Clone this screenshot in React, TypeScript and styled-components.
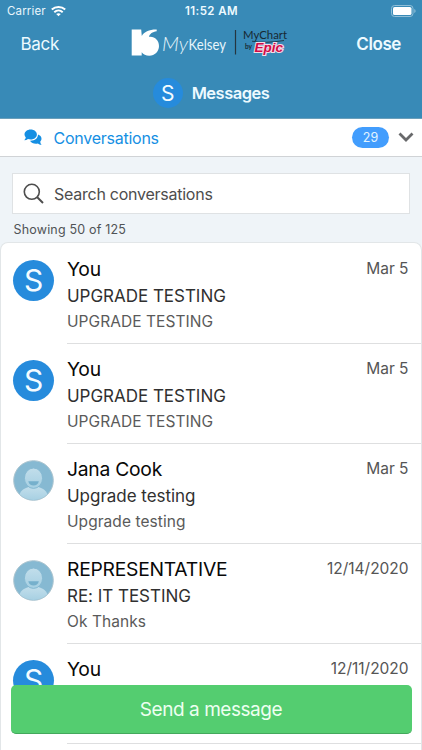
import React from "react";
import styled, { createGlobalStyle } from "styled-components";

const Global = createGlobalStyle`
  * { box-sizing: border-box; }
  html, body { margin: 0; height: 750px; overflow: hidden; }
  body { font-family: Inter, "Liberation Sans", sans-serif; background: #eff4f8; }
`;

const Screen = styled.div`
  position: relative;
  width: 422px;
  height: 750px;
  overflow: hidden;
  display: flex;
  flex-direction: column;
  background: #eff4f8;
`;

const Header = styled.header`
  flex: none;
  height: 119px;
  background: #388ab7;
  border-bottom: 1px solid #6b9fba;
  color: #fff;
  display: flex;
  flex-direction: column;
`;

const StatusBar = styled.div`
  height: 22px;
  padding: 0 6px 0 7px;
  display: grid;
  grid-template-columns: 1fr auto 1fr;
  align-items: center;
  font-size: 11.5px;
`;

const Carrier = styled.div`
  display: flex;
  align-items: center;
  gap: 5px;
  letter-spacing: 0.15px;
  color: #e9f6fc;
  svg { display: block; margin-top: -1px; }
`;

const Clock = styled.div`
  font-weight: 600;
  letter-spacing: 0.4px;
  color: #edfaff;
`;

const Battery = styled.svg`
  display: block;
  justify-self: end;
  margin-top: -1px;
`;

const NavBar = styled.nav`
  height: 42px;
  padding: 0 21px 0 20.5px;
  display: grid;
  grid-template-columns: 1fr auto 1fr;
  align-items: center;
`;

const NavLink = styled.span<{ $strong?: boolean }>`
  font-size: 17px;
  line-height: 22px;
  margin-top: 1px;
  font-weight: ${(p) => (p.$strong ? 600 : 400)};
  letter-spacing: ${(p) => (p.$strong ? "-0.4px" : "-0.3px")};
  justify-self: ${(p) => (p.$strong ? "end" : "start")};
  color: #edfaff;
`;

const Logo = styled.svg`
  display: block;
  margin-right: 1px;
`;

const TitleBar = styled.div`
  height: 54px;
  padding-top: 4px;
  display: flex;
  align-items: center;
  justify-content: center;
  gap: 9px;
  font-size: 16.5px;
  font-weight: 600;
  letter-spacing: -0.5px;
  color: #edfaff;
`;

const TitleText = styled.span`
  padding-bottom: 1px;
`;

const Initial = styled.span<{ $size: number; $font: number }>`
  flex: none;
  width: ${(p) => p.$size}px;
  height: ${(p) => p.$size}px;
  padding-bottom: ${(p) => (p.$size > 35 ? 2 : 0)}px;
  border-radius: 50%;
  background: #268bdc;
  color: #f4fbff;
  display: flex;
  align-items: center;
  justify-content: center;
  font-size: ${(p) => p.$font}px;
  font-weight: 400;
  letter-spacing: 0;
`;

const FolderBar = styled.div`
  flex: none;
  height: 38px;
  padding: 0 8.5px 0 24px;
  background: #fff;
  border-bottom: 1px solid #d0d3d6;
  display: flex;
  align-items: center;
  svg { display: block; flex: none; }
`;

const FolderName = styled.span`
  flex: 1;
  margin-left: 11.5px;
  font-size: 16px;
  letter-spacing: -0.25px;
  color: #158fe3;
`;

const Count = styled.span`
  width: 37px;
  height: 21px;
  margin-right: 8.5px;
  border-radius: 11px;
  background: #429dfd;
  color: #e2f4ff;
  font-size: 12.5px;
  display: flex;
  align-items: center;
  justify-content: center;
`;

const SearchBox = styled.div`
  flex: none;
  height: 41px;
  margin: 16px 12px 0;
  padding-left: 10px;
  background: #fff;
  border: 1px solid #dfe2e4;
  display: flex;
  align-items: center;
  gap: 10px;
  font-size: 16px;
  letter-spacing: -0.25px;
  color: #4d4d4d;
`;

const Showing = styled.div`
  flex: none;
  height: 29px;
  padding: 7px 13.5px 0;
  font-size: 12.5px;
  line-height: 18px;
  letter-spacing: 0.18px;
  color: #505356;
`;

const List = styled.ul`
  flex: none;
  margin: 0 1px;
  padding: 1px 0 0 12px;
  list-style: none;
  background: #fff;
  border-radius: 7px 7px 0 0;
  box-shadow: 0 0 0 1px #e2e6e8;
`;

const Item = styled.li`
  height: 100px;
  display: flex;
  gap: 13px;
  & > :first-child { margin-top: 16px; }
`;

const Body = styled.div`
  flex: 1;
  height: 100px;
  padding: 11px 12.5px 0 0;
  border-bottom: 1.5px solid #dedfe0;
`;

const TopLine = styled.div`
  display: flex;
  justify-content: space-between;
  align-items: center;
  height: 28px;
`;

const Sender = styled.span`
  font-size: 19.3px;
  line-height: 24px;
  padding-bottom: 1px;
  letter-spacing: -0.25px;
  color: #080808;
`;

const DateText = styled.span`
  font-size: 15.5px;
  letter-spacing: -0.03px;
  padding-bottom: 1px;
  color: #555;
`;

const Subject = styled.div`
  font-size: 17px;
  line-height: 26px;
  letter-spacing: -0.03px;
  color: #303030;
`;

const Preview = styled.div`
  font-size: 15.5px;
  line-height: 25px;
  letter-spacing: 0.06px;
  color: #5a5a5a;
`;

const SendButton = styled.button`
  position: absolute;
  left: 10.5px;
  right: 10.5px;
  bottom: 16.5px;
  height: 49px;
  padding: 2px 0 0;
  border: 0;
  border-bottom: 1.5px solid #43a85c;
  border-radius: 5px;
  background: #54cd70;
  color: #edfff0;
  font-family: inherit;
  font-size: 19px;
  letter-spacing: -0.45px;
`;

const Person = () => (
  <svg width="41" height="41" viewBox="0 0 41 41">
    <defs>
      <linearGradient id="person" x1="0" y1="0" x2="0" y2="1">
        <stop offset="0" stopColor="#c2deeb" />
        <stop offset="1" stopColor="#a5cfe2" />
      </linearGradient>
      <clipPath id="disc"><circle cx="20.5" cy="20.5" r="19.5" /></clipPath>
    </defs>
    <circle cx="20.5" cy="20.5" r="19.8" fill="#86b9d2" stroke="#abc4cf" />
    <g clipPath="url(#disc)">
      <path d="M6 41v-5c1-5 5-8 10-9h9c5 1 9 4 10 9v5z" fill="url(#person)" />
      <ellipse cx="20.5" cy="18.200" rx="9.100" ry="10.200" fill="url(#person)" stroke="#86b9d2" strokeWidth="1" />
      <path d="M15.300 21.200h10.500c-.6 3-2.600 4.300-5.200 4.300s-4.700-1.300-5.300-4.300z" fill="#76b0cc" />
    </g>
  </svg>
);

const Brand = () => (
  <Logo width="158" height="36" viewBox="0 0 158 36">
    <path
      d="M.7 4.500h9.500l.6 6.500C13 7 18.500 4.300 25.700 4.500v1.700C21.500 6.800 18.600 8.700 18 11.900c5.600-.8 10 3.500 10 9.100 0 5.500-4.300 9.700-9.700 9.700-3.400 0-6-1.200-7.600-3.400v3.200H.7z"
      fill="#fff"
    />
    <text x="31" y="25.500" fontFamily="Lato" fontStyle="italic" fontWeight="300" fontSize="20" fill="#e7f5fb" textLength="26" lengthAdjust="spacingAndGlyphs">My</text>
    <text x="57.500" y="25" fontFamily="Lato" fontSize="14.500" fill="#e7f5fb" textLength="37.500" lengthAdjust="spacingAndGlyphs">Kelsey</text>
    <path d="M104.500 5v24.500" stroke="#25353f" strokeWidth="1.200" />
    <text x="112" y="13.800" fontFamily="Lato" fontSize="12" fill="#172832" textLength="44" lengthAdjust="spacingAndGlyphs">MyChart</text>
    <path d="M121 16.200q13 2.500 32-.7" stroke="#172832" strokeWidth=".8" fill="none" />
    <text x="114" y="23.500" fontFamily="Lato" fontWeight="700" fontSize="6.500" fill="#172832" textLength="7">by</text>
    <text
      x="123.500" y="27.300" fontFamily="Liberation Sans" fontStyle="italic" fontWeight="700" fontSize="12"
      fill="#d00b46" stroke="#f6dbe6" strokeWidth="2" paintOrder="stroke" textLength="28.500" lengthAdjust="spacingAndGlyphs"
    >Epic</text>
  </Logo>
);

const messages = [
  { from: "You", subject: "UPGRADE TESTING", preview: "UPGRADE TESTING", date: "Mar 5", self: true },
  { from: "You", subject: "UPGRADE TESTING", preview: "UPGRADE TESTING", date: "Mar 5", self: true },
  { from: "Jana Cook", subject: "Upgrade testing", preview: "Upgrade testing", date: "Mar 5", self: false },
  { from: "REPRESENTATIVE", subject: "RE: IT TESTING", preview: "Ok Thanks", date: "12/14/2020", self: false },
  { from: "You", subject: "", preview: "", date: "12/11/2020", self: true },
];

export default function App() {
  return (
    <>
      <Global />
      <Screen>
        <Header>
          <StatusBar>
            <Carrier>
              Carrier
              <svg width="15" height="12" viewBox="0 0 15 12" fill="none" stroke="#fff" strokeWidth="2">
                <path d="M.8 4.500C4.500 1 10.500 1 14.200 4.500M3.300 7.200c2.400-2.200 6-2.200 8.400 0" />
                <path d="M7.500 11.300 5.200 9c1.300-1.100 3.300-1.100 4.600 0z" fill="#fff" stroke="none" />
              </svg>
            </Carrier>
            <Clock>11:52 AM</Clock>
            <Battery width="25" height="12" viewBox="0 0 25 12">
              <rect x=".5" y=".5" width="21.500" height="11" rx="3" fill="none" stroke="#90bfd8" />
              <rect x="2" y="2" width="18.500" height="8" rx="1.600" fill="#fff" />
              <path d="M23.300 4v4q1.300-.6 1.300-2t-1.300-2z" fill="#90bfd8" />
            </Battery>
          </StatusBar>
          <NavBar>
            <NavLink>Back</NavLink>
            <Brand />
            <NavLink $strong>Close</NavLink>
          </NavBar>
          <TitleBar>
            <Initial $size={30} $font={21}>S</Initial>
            <TitleText>Messages</TitleText>
          </TitleBar>
        </Header>
        <FolderBar>
          <svg width="18" height="18" viewBox="0 0 18 18" fill="#158fe3">
            <path d="M6.700.5c3.500 0 6.200 2.200 6.200 5s-2.700 5-6.200 5c-1 0-1.900-.2-2.700-.5-1 .8-2.200 1.200-3.700 1.200.9-.9 1.400-1.800 1.500-2.700C1 7.600.5 6.600.5 5.500c0-2.800 2.700-5 6.200-5z" />
            <path d="M14 5.500c2 .6 3.500 2.300 3.500 4.300 0 1.100-.5 2.100-1.300 2.900.1 1.200.6 2.200 1.400 3-1.500 0-2.800-.5-3.700-1.300-3.300.8-6.600-.5-7.900-2.700C10.400 12 14 9.500 14 5.500z" />
          </svg>
          <FolderName>Conversations</FolderName>
          <Count>29</Count>
          <svg width="16" height="11" viewBox="0 0 16 11" fill="none" stroke="#68696b" strokeWidth="2.800">
            <path d="m1.500 1.500 6.500 6.500 6.500-6.500" />
          </svg>
        </FolderBar>
        <SearchBox>
          <svg width="21" height="21" viewBox="0 0 21 21" fill="none" stroke="#4d4d4d" strokeWidth="1.600">
            <circle cx="8.800" cy="8.800" r="7.500" />
            <path d="m14 14 6 6" strokeWidth="2" />
          </svg>
          Search conversations
        </SearchBox>
        <Showing>Showing 50 of 125</Showing>
        <List>
          {messages.map((m, i) => (
            <Item key={i}>
              {m.self ? <Initial $size={41} $font={30}>S</Initial> : <Person />}
              <Body>
                <TopLine>
                  <Sender>{m.from}</Sender>
                  <DateText>{m.date}</DateText>
                </TopLine>
                <Subject>{m.subject}</Subject>
                <Preview>{m.preview}</Preview>
              </Body>
            </Item>
          ))}
          <Item />
        </List>
        <SendButton>Send a message</SendButton>
      </Screen>
    </>
  );
}
